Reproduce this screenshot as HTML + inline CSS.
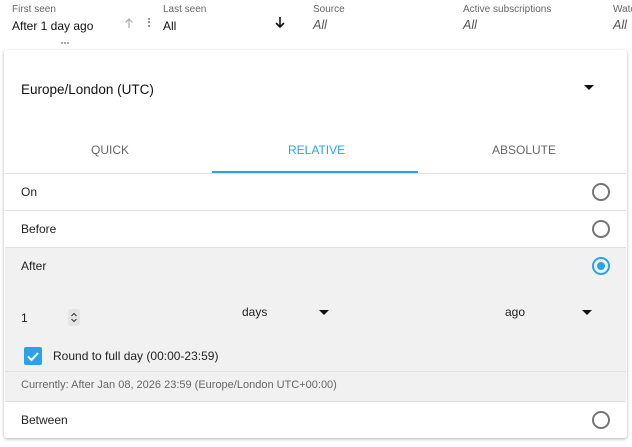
<!DOCTYPE html>
<html><head><style>
*{margin:0;padding:0;box-sizing:border-box}
body{width:632px;height:447px;background:#fff;font-family:"Liberation Sans",sans-serif;position:relative;overflow:hidden;color:#212121}
.a{position:absolute;white-space:nowrap}
.lbl{font-size:10px;color:#666}
.val{font-size:12px;color:#111}
.it{font-size:12.5px;font-style:italic;color:#555}
.radio{position:absolute;width:18px;height:18px;border:2px solid #757575;border-radius:50%}
.line{position:absolute;left:5px;width:621px;height:1px;background:#e0e0e0}
.tri{position:absolute;width:0;height:0;border-left:5px solid transparent;border-right:5px solid transparent;border-top:5px solid #111}
</style></head><body>
<div class="a lbl" style="left:12px;top:4px">First seen</div>
<div class="a val" style="left:12px;top:19px">After 1 day ago</div>
<svg class="a" style="left:124px;top:17px" width="10" height="12"><path d="M5 11V2M1.5 5.5L5 2l3.5 3.5" stroke="#aaa" stroke-width="1.2" fill="none"/></svg>
<div class="a" style="left:148px;top:18px;width:2px;height:9px;border-left:2px dotted #999"></div>
<div class="a" style="left:61px;top:42px;width:8px;height:2px;border-top:2px dotted #aaa"></div>
<div class="a lbl" style="left:163px;top:4px">Last seen</div>
<div class="a val" style="left:163px;top:19px">All</div>
<svg class="a" style="left:274px;top:16px" width="12" height="13"><path d="M6 1v10M2 7l4 4 4-4" stroke="#111" stroke-width="1.6" fill="none"/></svg>
<div class="a lbl" style="left:313px;top:4px">Source</div>
<div class="a it" style="left:313px;top:18px">All</div>
<div class="a lbl" style="left:463px;top:4px">Active subscriptions</div>
<div class="a it" style="left:463px;top:18px">All</div>
<div class="a lbl" style="left:613px;top:4px">Watc</div>
<div class="a it" style="left:613px;top:18px">All</div>

<div class="a" style="left:4px;top:50px;width:623px;height:388px;background:#fff;border-radius:3px;box-shadow:0 1px 3px rgba(0,0,0,.3)"></div>
<div class="a" style="left:21px;top:82px;font-size:13.5px;color:#111">Europe/London (UTC)</div>
<div class="tri" style="left:584px;top:85px"></div>
<div class="a" style="left:91px;top:143px;font-size:12px;color:#666">QUICK</div>
<div class="a" style="left:288px;top:143px;font-size:12px;color:#29a3e6">RELATIVE</div>
<div class="a" style="left:492px;top:143px;font-size:12px;color:#666">ABSOLUTE</div>
<div class="a" style="left:212px;top:171px;width:206px;height:2px;background:#29a3e6"></div>
<div class="line" style="top:173px"></div>
<div class="a" style="left:21px;top:185px;font-size:12px">On</div>
<div class="radio" style="left:592px;top:183px"></div>
<div class="line" style="top:210px"></div>
<div class="a" style="left:21px;top:222px;font-size:12px">Before</div>
<div class="radio" style="left:592px;top:220px"></div>
<div class="a" style="left:5px;top:247px;width:621px;height:154px;background:#f1f1f1;border-top:1px solid #e0e0e0"></div>
<div class="a" style="left:21px;top:259px;font-size:12px">After</div>
<div class="radio" style="left:592px;top:257px;border-color:#29a3e6"><div style="position:absolute;left:3px;top:3px;width:8px;height:8px;border-radius:50%;background:#29a3e6"></div></div>
<div class="a" style="left:21px;top:311px;font-size:12px">1</div>
<svg class="a" style="left:68px;top:309px" width="12" height="17"><rect width="12" height="17" rx="3" fill="#e4e4e4"/><path d="M3.5 7L6 4.5 8.5 7M3.5 10L6 12.5 8.5 10" stroke="#333" stroke-width="1" fill="none"/></svg>
<div class="a" style="left:242px;top:305px;font-size:12px">days</div>
<div class="tri" style="left:319px;top:310px"></div>
<div class="a" style="left:505px;top:305px;font-size:12px">ago</div>
<div class="tri" style="left:582px;top:310px"></div>
<div class="a" style="left:24px;top:347px;width:18px;height:18px;background:#29a3e6;border-radius:2px"><svg width="18" height="18"><path d="M4 9.5l3.5 3.5 6.5-7" stroke="#fff" stroke-width="2" fill="none"/></svg></div>
<div class="a" style="left:53px;top:349px;font-size:12px">Round to full day (00:00-23:59)</div>
<div class="line" style="top:371px"></div>
<div class="a" style="left:21px;top:379px;font-size:11px;color:#666">Currently: After Jan 08, 2026 23:59 (Europe/London UTC+00:00)</div>
<div class="line" style="top:401px"></div>
<div class="a" style="left:21px;top:413px;font-size:12px">Between</div>
<div class="radio" style="left:592px;top:411px"></div>
</body></html>
